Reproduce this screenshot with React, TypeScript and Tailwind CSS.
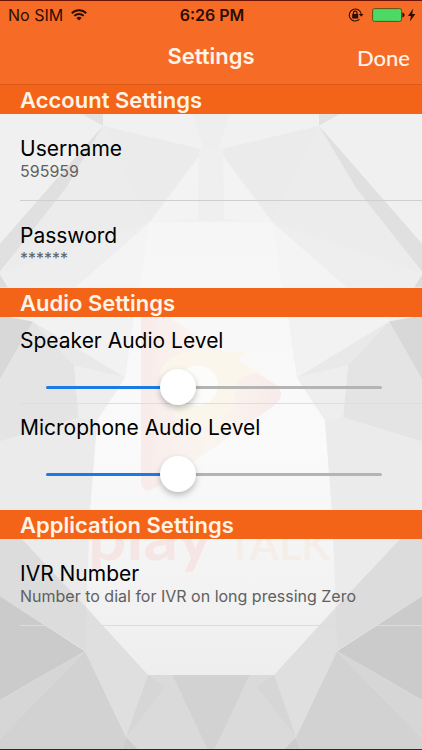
// src/App.tsx

import { useId, useState } from 'react';
import type { CSSProperties, ReactNode } from 'react';

// Facets of the left half, the right half is the same list mirrored
const facets = [
  { points: '80,113 103,126 103,113', fill: '#e2e2e2' },
  { points: '103,113 103,126 204,150 192,113', fill: '#f1f1f1' },
  { points: '192,113 211,113 211,150 204,150', fill: '#eeeeee' },
  { points: '103,126 204,150 149,223', fill: '#ebebeb' },
  { points: '103,126 149,223 0,275', fill: '#ececec' },
  { points: '204,150 149,223 198,219 199,150', fill: '#f3f3f3' },
  { points: '199,150 211,150 211,223 198,219', fill: '#efefef' },
  { points: '103,126 0,244 0,272 66,188', fill: '#e0e0e0' },
  { points: '0,275 0,288 8,288', fill: '#dcdcdc' },
  { points: '0,274 149,223 75,288 8,288', fill: '#eeeeee' },
  { points: '149,223 140,288 75,288', fill: '#f4f4f4' },
  { points: '0,316 33,322 0,380', fill: '#d8d8d8' },
  { points: '33,322 74,366 79,418 0,442 0,380', fill: '#e4e4e4' },
  { points: '33,322 125,378 74,366', fill: '#e9e9e9' },
  { points: '33,322 33,288 138,288 125,378', fill: '#f2f2f2' },
  { points: '74,366 125,378 97,421 79,418', fill: '#eeeeee' },
  { points: '0,442 79,418 97,421 90,512 86,608 22,540 0,520', fill: '#ebebeb' },
  { points: '0,518 22,540 86,608 86,652 0,597', fill: '#dcdcdc' },
  { points: '86,608 148,676 126,738 85,652', fill: '#dfdfdf' },
  { points: '0,597 85,652 0,701', fill: '#cbcbcb' },
  { points: '0,701 85,652 0,739', fill: '#d6d6d6' },
  { points: '0,739 85,652 126,738 122,750 0,750', fill: '#d2d2d2' },
  { points: '148,676 172,676 207,750 138,750 126,738', fill: '#dadada' },
  { points: '148,676 165,688 126,738', fill: '#d6d6d6' },
  { points: '126,738 138,750 122,750', fill: '#cdcdcd' },
  { points: '172,676 211,676 211,750 207,750', fill: '#d2d2d2' },
];

function Backdrop() {
  const id = useId();
  return (
    <svg
      className="absolute inset-0 -z-10 h-full w-full"
      viewBox="0 0 422 750"
      preserveAspectRatio="none"
      aria-hidden="true"
    >
      <defs>
        <linearGradient id={id + 'body'} x1="0" y1="0" x2="0" y2="1">
          <stop offset="0" stopColor="#f6f6f6" />
          <stop offset="0.5" stopColor="#fafafa" />
          <stop offset="1" stopColor="#eeeeee" />
        </linearGradient>
        <linearGradient id={id + 'play'} x1="0" y1="0" x2="1" y2="0">
          <stop offset="0" stopColor="#f8ebea" />
          <stop offset="0.2" stopColor="#f9f0ee" />
          <stop offset="0.5" stopColor="#faf5ee" />
          <stop offset="1" stopColor="#f8ebeb" />
        </linearGradient>
        <g id={id + 'half'}>
          {facets.map((facet) => (
            <polygon key={facet.points} points={facet.points} fill={facet.fill} />
          ))}
        </g>
      </defs>

      <rect width="422" height="750" fill="#f0f0f0" />
      <polygon
        points="149,222 273,222 284,288 297,378 325,421 332,512 336,608 274,676 148,676 86,608 90,512 97,421 125,378 138,288"
        fill={`url(#${id}body)`}
      />
      <use href={`#${id}half`} />
      <use href={`#${id}half`} transform="translate(422 0) scale(-1 1)" />

      {/* Faded logo */}
      <path
        d="M141 312 Q141 302 150 306 L274 384 Q288 395 274 406 L160 486 Q141 498 141 482 Z"
        fill={`url(#${id}play)`}
      />
      <path d="M160 372 Q172 350 200 352 L246 353 L238 361 L262 374 Q240 372 236 388 Q232 426 198 428 Q166 426 160 372 Z" fill="#faf6ec" />
      <circle cx="198" cy="386" r="20" fill="#fcfcfa" />
      <text x="88" y="561" fontSize="68" fontWeight="700" fontFamily="Lato, sans-serif" fill="#f5e6e5">
        play
      </text>
      <text x="227" y="561" fontSize="43" fontWeight="600" fontFamily="Lato, sans-serif" fill="#f5eee8">
        TALK
      </text>
    </svg>
  );
}

function WifiIcon() {
  return (
    <svg className="h-3 w-4" viewBox="0 0 16 12" fill="none" stroke="#2b0d02" aria-hidden="true">
      <path d="M0.8 4.2 A10.4 10.4 0 0 1 15.2 4.2" strokeWidth="1.9" />
      <path d="M3.3 6.9 A6.8 6.8 0 0 1 12.7 6.9" strokeWidth="1.9" />
      <path d="M8 11.6 L5.4 9 A3.7 3.7 0 0 1 10.6 9 Z" fill="#2b0d02" stroke="none" />
    </svg>
  );
}

function RotationLockIcon() {
  return (
    <svg className="h-4 w-4" viewBox="0 0 16 16" fill="none" stroke="#2b0d02" aria-hidden="true">
      <path d="M11.4 12.4 A6 6 0 1 1 13.2 7" strokeWidth="1.1" />
      <path d="M10.9 7 L15.5 7 L13.3 9.8 Z" fill="#2b0d02" stroke="none" />
      <rect x="4.2" y="7" width="6" height="4.4" rx="0.5" fill="#2b0d02" stroke="none" />
      <path d="M5.4 7.4 V6 A1.8 1.8 0 0 1 9 6 V7.4" strokeWidth="1.2" />
    </svg>
  );
}

function BatteryIcon() {
  return (
    <svg className="h-4 w-11" viewBox="0 0 44 16" aria-hidden="true">
      <rect x="0.6" y="1.6" width="29" height="12.8" rx="2" fill="#4cd964" stroke="#6b4a12" strokeWidth="1" />
      <path d="M30.4 5.6 Q32.6 6 32.6 8 Q32.6 10 30.4 10.4 Z" fill="#2b0d02" />
      <path d="M41.2 1.6 L36 8.9 L39 8.9 L37.8 14.4 L43.4 6.9 L40.2 6.9 Z" fill="#2b0d02" />
    </svg>
  );
}

function StatusBar() {
  return (
    <div className="grid h-7 grid-cols-3 items-center border-t border-[#6d1405] pr-1.5 pl-2 text-base text-[#2b0d02]">
      <div className="flex items-center gap-2">
        <span>No SIM</span>
        <WifiIcon />
      </div>
      <span className="text-center font-semibold">6:26 PM</span>
      <div className="flex items-center justify-end gap-2">
        <RotationLockIcon />
        <BatteryIcon />
      </div>
    </div>
  );
}

function Section({ title, children }: { title: string; children: ReactNode }) {
  return (
    <section>
      <h2 className="bg-[#f36318] px-5 pt-0.5 text-[22px] leading-[27px] font-semibold text-[#fff4e6]">{title}</h2>
      {children}
    </section>
  );
}

function TextRow({ label, value, line }: { label: string; value: string; line: string }) {
  return (
    <div className={`ml-5 flex h-[87px] flex-col justify-center border-b pt-1 ${line}`}>
      <h3 className="text-[21px] leading-6 text-black">{label}</h3>
      <p className="text-base leading-5 text-[#606060]">{value}</p>
    </div>
  );
}

function SliderRow({ label, line }: { label: string; line: string }) {
  const id = useId();
  const [level, setLevel] = useState(38);
  // the fill ends under the middle of the 36px thumb
  const fill = { '--fill': `calc(18px + (100% - 36px) * ${level / 100})` } as CSSProperties;

  return (
    <div className={`ml-5 h-[87px] border-b pt-3 ${line}`}>
      <label htmlFor={id} className="block text-[21px] leading-6 text-black">
        {label}
      </label>
      <div className="pt-4 pr-10 pl-[26px]">
        <input
          id={id}
          type="range"
          min={0}
          max={100}
          value={level}
          onChange={(e) => setLevel(Number(e.target.value))}
          style={fill}
          className="block h-9 w-full appearance-none bg-transparent [&::-webkit-slider-runnable-track]:h-[3px] [&::-webkit-slider-runnable-track]:rounded-full [&::-webkit-slider-runnable-track]:bg-[linear-gradient(to_right,#1c7ae4_var(--fill),#b4b4b4_var(--fill))] [&::-webkit-slider-thumb]:-mt-[17px] [&::-webkit-slider-thumb]:size-9 [&::-webkit-slider-thumb]:appearance-none [&::-webkit-slider-thumb]:rounded-full [&::-webkit-slider-thumb]:bg-white [&::-webkit-slider-thumb]:shadow-[0_3px_6px_rgba(0,0,0,0.25)]"
        />
      </div>
    </div>
  );
}

export default function App() {
  return (
    <main className="relative isolate min-h-screen border-b border-[#2a2a2a] font-[Inter,sans-serif]">
      <Backdrop />

      <header className="border-b border-[#d9591b] bg-[#f66c27]">
        <StatusBar />
        <div className="grid h-14 grid-cols-3 items-center px-3 text-[#fff4e6]">
          <h1 className="col-start-2 text-center text-[22px] font-semibold">Settings</h1>
          <button type="button" className="justify-self-end pt-0.5 font-[Lato,sans-serif] text-[22px] font-medium">
            Done
          </button>
        </div>
      </header>

      <Section title="Account Settings">
        <TextRow label="Username" value="595959" line="border-[#cfcfd1]" />
        <TextRow label="Password" value="******" line="border-transparent" />
      </Section>

      <Section title="Audio Settings">
        <SliderRow label="Speaker Audio Level" line="border-[#dedede]" />
        <SliderRow label="Microphone Audio Level" line="border-transparent" />
        <div className="h-[19px]" />
      </Section>

      <Section title="Application Settings">
        <TextRow
          label="IVR Number"
          value="Number to dial for IVR on long pressing Zero"
          line="border-[#dcdce0]"
        />
      </Section>
    </main>
  );
}
